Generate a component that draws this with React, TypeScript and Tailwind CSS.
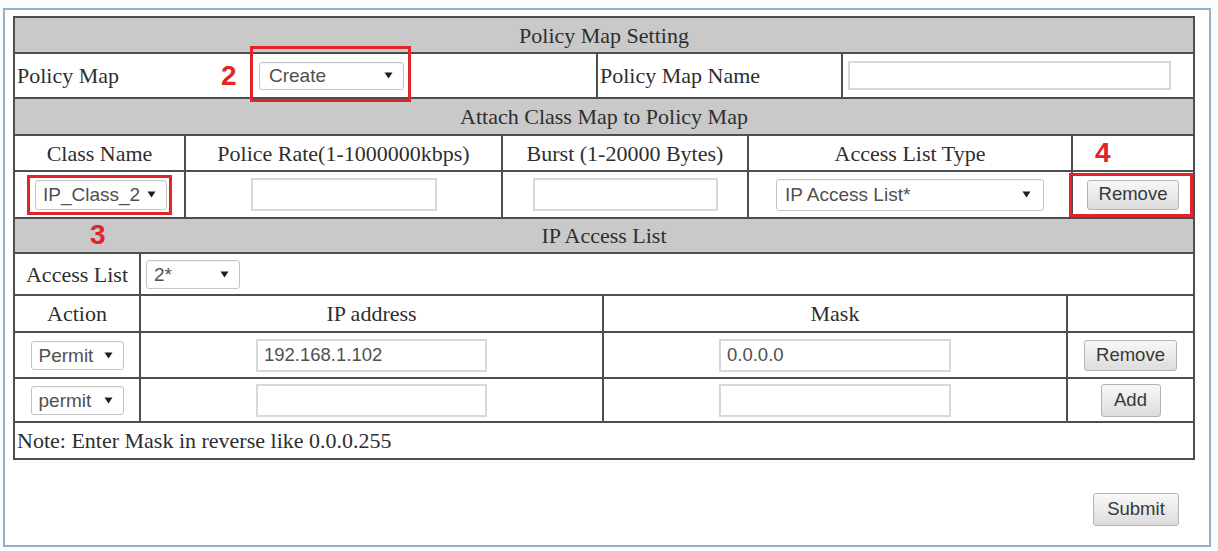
import React from "react";

function Arrow() {
  return (
    <svg width="9" height="7" viewBox="0 0 9 7" className="shrink-0">
      <path d="M0.5 0.5 L8.5 0.5 L4.5 6.5 Z" fill="#1e1e1e" />
    </svg>
  );
}

function Sel({ label, className }: { label: string; className: string }) {
  return (
    <div
      className={`flex items-center justify-between bg-white border border-[#c4c4c4] rounded-[3px] pl-[7px] pr-[10px] font-['Liberation_Sans',Arial,sans-serif] text-[19px] leading-none text-[#505050] shadow-[inset_0_1px_1px_rgba(0,0,0,0.04)] ${className}`}
    >
      <span>{label}</span>
      <Arrow />
    </div>
  );
}

function Inp({ value, className }: { value?: string; className: string }) {
  return (
    <input
      readOnly
      defaultValue={value ?? ""}
      className={`bg-white border-2 border-[#d8d8d8] pl-[6px] font-['Liberation_Sans',Arial,sans-serif] text-[18.5px] text-[#505050] outline-none ${className}`}
    />
  );
}

function Btn({ label, className }: { label: string; className: string }) {
  return (
    <button
      className={`flex items-center justify-center border border-[#b4b4b4] rounded-[3px] bg-linear-to-b from-[#f8f8f8] to-[#dcdcdc] font-['Liberation_Sans',Arial,sans-serif] text-[18.5px] leading-none text-[#383838] ${className}`}
    >
      {label}
    </button>
  );
}

const redNum =
  "font-['Liberation_Sans',Arial,sans-serif] font-bold text-[28px] leading-none text-[#e0242a]";

export default function App() {
  return (
    <div className="w-[1218px] h-[551px] bg-[#fbfcfd] pt-[8px] pl-[3px] font-['Liberation_Serif','Times_New_Roman',serif] text-[22px] text-[#2e2e2e]">
      <div className="w-[1208px] h-[539px] border-2 border-[#93b1ca] bg-white pl-[8px] pt-[6px]">
        <div className="w-[1182px] border-2 border-[#4e4e4e]">
          {/* Row 1 */}
          <div className="h-[34px] bg-[#c9c9c9] flex items-center justify-center">
            Policy Map Setting
          </div>
          {/* Row 2 */}
          <div className="h-[45px] border-t-2 border-[#4e4e4e] flex">
            <div className="relative w-[581px] flex items-center pl-[2px]">
              <span className="w-[204px]">Policy Map</span>
              <span className={`w-[16px] ${redNum}`}>2</span>
              <Sel label="Create" className="ml-[22px] w-[145px] h-[28px] pl-[9px]" />
              <div className="absolute left-[235px] top-[-8px] w-[161px] h-[56px] border-[3px] border-[#e0242a] z-10" />
            </div>
            <div className="w-[245px] border-l-2 border-[#4e4e4e] flex items-center pl-[2px]">
              Policy Map Name
            </div>
            <div className="flex-1 border-l-2 border-[#4e4e4e] flex items-center pl-[5px]">
              <Inp className="w-[323px] h-[29px]" />
            </div>
          </div>
          {/* Row 3 */}
          <div className="h-[37px] border-t-2 border-[#4e4e4e] bg-[#c9c9c9] flex items-center justify-center">
            Attach Class Map to Policy Map
          </div>
          {/* Row 4 */}
          <div className="h-[36px] border-t-2 border-[#4e4e4e] flex">
            <div className="w-[169px] flex items-center justify-center">Class Name</div>
            <div className="w-[317px] border-l-2 border-[#4e4e4e] flex items-center justify-center">
              Police Rate(1-1000000kbps)
            </div>
            <div className="w-[246px] border-l-2 border-[#4e4e4e] flex items-center justify-center">
              Burst (1-20000 Bytes)
            </div>
            <div className="w-[324px] border-l-2 border-[#4e4e4e] flex items-center justify-center">
              Access List Type
            </div>
            <div className="flex-1 border-l-2 border-[#4e4e4e] flex items-center pl-[22px]">
              <span className={redNum}>4</span>
            </div>
          </div>
          {/* Row 5 */}
          <div className="h-[47px] border-t-2 border-[#4e4e4e] flex">
            <div className="w-[169px] flex items-center justify-center">
              <div className="w-[145px] h-[40px] border-[3px] border-[#e0242a] flex items-center pl-[5px]">
                <Sel label="IP_Class_2" className="w-[132px] h-[30px] pl-[5px] pr-[6px]" />
              </div>
            </div>
            <div className="w-[317px] border-l-2 border-[#4e4e4e] flex items-center justify-center">
              <Inp className="w-[186px] h-[33px]" />
            </div>
            <div className="w-[246px] border-l-2 border-[#4e4e4e] flex items-center justify-center">
              <Inp className="w-[185px] h-[33px]" />
            </div>
            <div className="w-[324px] border-l-2 border-[#4e4e4e] flex items-center justify-center">
              <Sel label="IP Access List*" className="w-[268px] h-[32px] pl-[8px] pr-[12px]" />
            </div>
            <div className="relative flex-1 border-l-2 border-[#4e4e4e] flex items-center justify-center">
              <Btn label="Remove" className="w-[92px] h-[30px]" />
              <div className="absolute left-[-4px] top-[1px] w-[124px] h-[44px] border-[3px] border-[#e0242a] z-10" />
            </div>
          </div>
          {/* Row 6 */}
          <div className="relative h-[35px] border-t-2 border-[#4e4e4e] bg-[#c9c9c9] flex items-center justify-center">
            <span className={`absolute left-[75px] top-[2px] ${redNum}`}>3</span>
            IP Access List
          </div>
          {/* Row 7 */}
          <div className="h-[42px] border-t-2 border-[#4e4e4e] flex">
            <div className="w-[124px] flex items-center justify-center">Access List</div>
            <div className="flex-1 border-l-2 border-[#4e4e4e] flex items-center pl-[5px]">
              <Sel label="2*" className="w-[94px] h-[29px] pl-[6px] pr-[10px]" />
            </div>
          </div>
          {/* Row 8 */}
          <div className="h-[37px] border-t-2 border-[#4e4e4e] flex">
            <div className="w-[124px] flex items-center justify-center">Action</div>
            <div className="w-[463px] border-l-2 border-[#4e4e4e] flex items-center justify-center">
              IP address
            </div>
            <div className="w-[464px] border-l-2 border-[#4e4e4e] flex items-center justify-center">
              Mask
            </div>
            <div className="flex-1 border-l-2 border-[#4e4e4e]" />
          </div>
          {/* Row 9 */}
          <div className="h-[46px] border-t-2 border-[#4e4e4e] flex">
            <div className="w-[124px] flex items-center justify-center">
              <Sel label="Permit" className="w-[93px] h-[29px] pl-[6px] pr-[8px]" />
            </div>
            <div className="w-[463px] border-l-2 border-[#4e4e4e] flex items-center justify-center">
              <Inp value="192.168.1.102" className="w-[231px] h-[33px]" />
            </div>
            <div className="w-[464px] border-l-2 border-[#4e4e4e] flex items-center justify-center">
              <Inp value="0.0.0.0" className="w-[232px] h-[33px]" />
            </div>
            <div className="flex-1 border-l-2 border-[#4e4e4e] flex items-center justify-center">
              <Btn label="Remove" className="w-[93px] h-[31px]" />
            </div>
          </div>
          {/* Row 10 */}
          <div className="h-[44px] border-t-2 border-[#4e4e4e] flex">
            <div className="w-[124px] flex items-center justify-center">
              <Sel label="permit" className="w-[93px] h-[29px] pl-[6px] pr-[8px]" />
            </div>
            <div className="w-[463px] border-l-2 border-[#4e4e4e] flex items-center justify-center">
              <Inp className="w-[231px] h-[33px]" />
            </div>
            <div className="w-[464px] border-l-2 border-[#4e4e4e] flex items-center justify-center">
              <Inp className="w-[232px] h-[33px]" />
            </div>
            <div className="flex-1 border-l-2 border-[#4e4e4e] flex items-center justify-center">
              <Btn label="Add" className="w-[60px] h-[33px]" />
            </div>
          </div>
          {/* Row 11 */}
          <div className="h-[37px] border-t-2 border-[#4e4e4e] flex items-center pl-[2px]">
            Note: Enter Mask in reverse like 0.0.0.255
          </div>
        </div>
        <div className="w-[1182px] flex justify-end pr-[16px] mt-[33px]">
          <Btn label="Submit" className="w-[86px] h-[33px]" />
        </div>
      </div>
    </div>
  );
}
